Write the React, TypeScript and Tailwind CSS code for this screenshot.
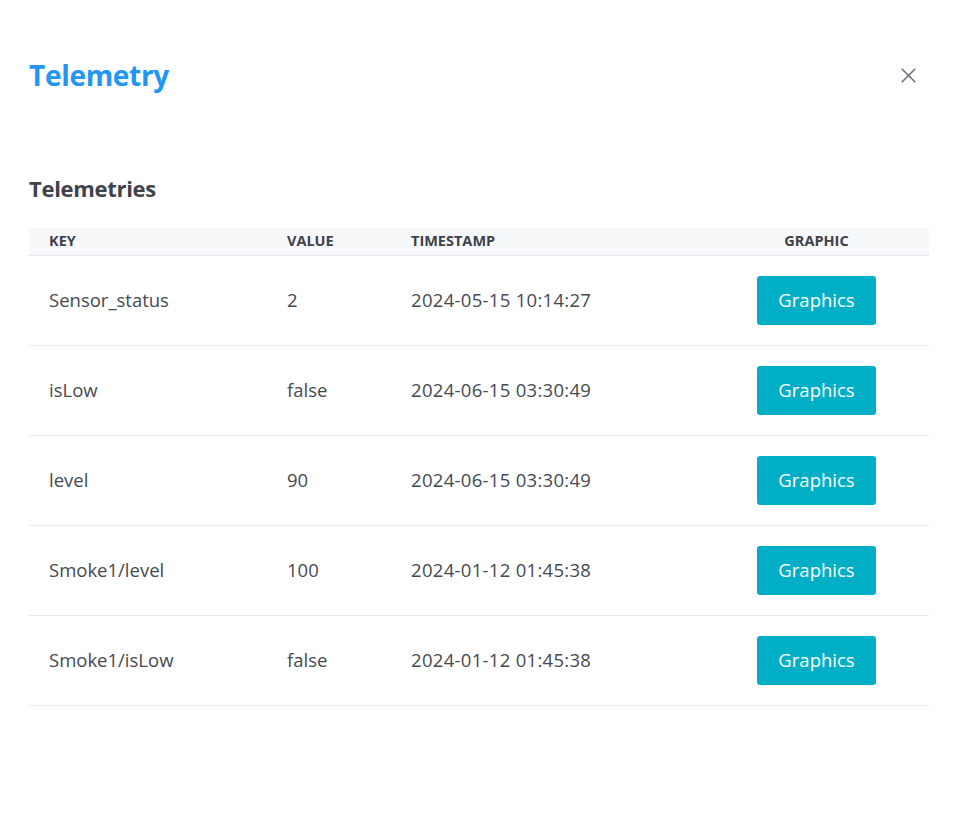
import { X } from "lucide-react";

const rows = [
    { key: "Sensor_status", value: "2", ts: "2024-05-15 10:14:27" },
    { key: "isLow", value: "false", ts: "2024-06-15 03:30:49" },
    { key: "level", value: "90", ts: "2024-06-15 03:30:49" },
    { key: "Smoke1/level", value: "100", ts: "2024-01-12 01:45:38" },
    { key: "Smoke1/isLow", value: "false", ts: "2024-01-12 01:45:38" },
];

export default function App() {
    return (
        <div className="w-[956px] h-[817px] bg-white pl-[29px] pr-[27px] pt-[57px] font-['Open_Sans',sans-serif] text-[#454a50]">
            {/* Header */}
            <div className="flex items-center justify-between h-[36px]">
                <h1 className="text-[28px] font-bold text-[#2196f3] tracking-[-0.3px]">Telemetry</h1>
                <button className="mr-[8px] text-[#6c757d]">
                    <X className="w-[25px] h-[25px]" strokeWidth={1.6} />
                </button>
            </div>

            <h2 className="mt-[80px] text-[22px] font-bold text-[#3f4248] leading-[30px] tracking-[-0.3px]">Telemetries</h2>

            {/* Table */}
            <table className="mt-[25px] w-full border-collapse">
                <thead>
                    <tr className="bg-[#f7f8fa] border-b border-[#e5e7eb] h-[27px] text-[14.5px] font-bold uppercase text-[#3f4248]">
                        <th className="w-[238px] pl-[20px] text-left font-bold">Key</th>
                        <th className="w-[124px] pl-[20px] text-left font-bold">Value</th>
                        <th className="w-[313px] pl-[20px] text-left font-bold">Timestamp</th>
                        <th className="text-center font-bold">Graphic</th>
                    </tr>
                </thead>
                <tbody>
                    {rows.map((r) => (
                        <tr key={r.key} className="h-[90px] border-b border-[#e9eaec] text-[18.5px]">
                            <td className="pl-[20px]">{r.key}</td>
                            <td className="pl-[20px]">{r.value}</td>
                            <td className="pl-[20px] tracking-[0.3px]">{r.ts}</td>
                            <td className="text-center">
                                <button className="w-[119px] h-[49px] rounded-[3px] bg-[#00afc6] text-white text-[18.5px]">
                                    Graphics
                                </button>
                            </td>
                        </tr>
                    ))}
                </tbody>
            </table>
        </div>
    );
}
